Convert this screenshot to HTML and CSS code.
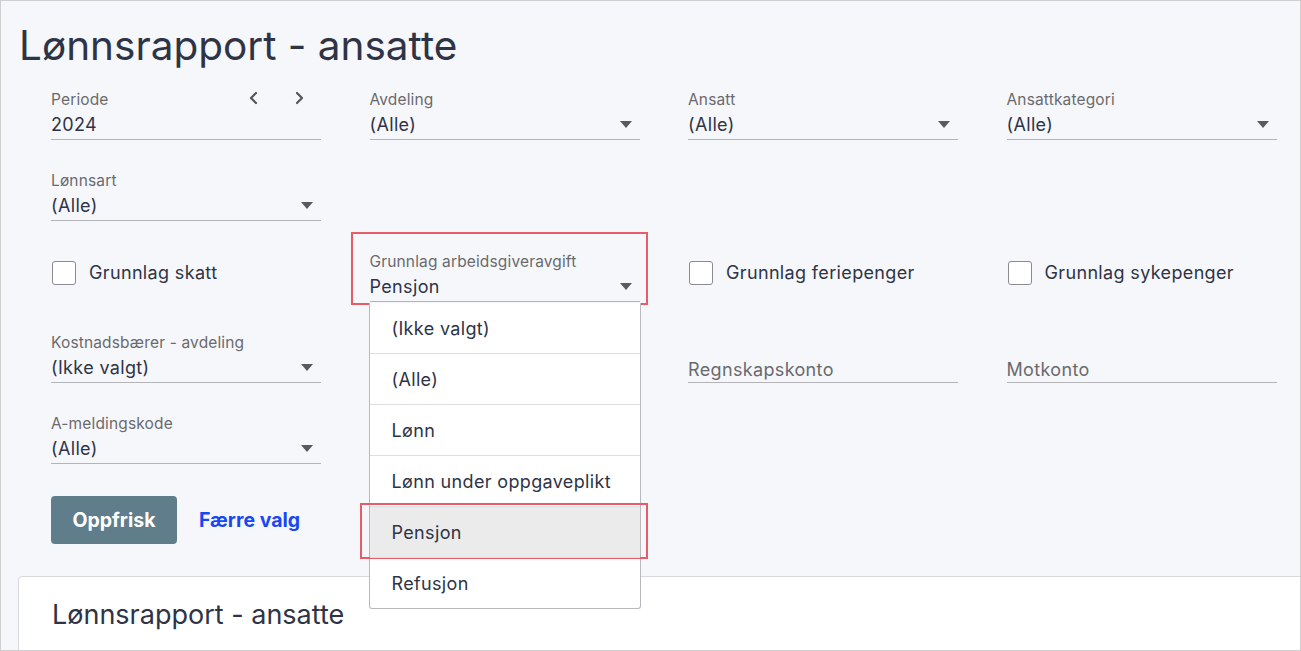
FILE: index.html
```html
<!DOCTYPE html>
<html lang="no">
<head>
<meta charset="utf-8">
<title>Lønnsrapport - ansatte</title>
<link rel="stylesheet" href="styles.css">
</head>
<body>
<div class="frame">
  <h1 class="title">Lønnsrapport - ansatte</h1>

  <div class="filters">
    <!-- row 1 -->
    <div class="field">
      <div class="label-row">
        <span class="label">Periode</span>
        <span class="nav">
          <svg width="12" height="14" viewBox="0 0 12 14"><path d="M8 2 L3 7 L8 12" fill="none" stroke="#555" stroke-width="2.2" stroke-linecap="round" stroke-linejoin="round"/></svg>
          <svg width="12" height="14" viewBox="0 0 12 14"><path d="M4 2 L9 7 L4 12" fill="none" stroke="#555" stroke-width="2.2" stroke-linecap="round" stroke-linejoin="round"/></svg>
        </span>
      </div>
      <div class="value">2024</div>
    </div>
    <div class="field select">
      <span class="label">Avdeling</span>
      <div class="value">(Alle)</div>
      <span class="caret"></span>
    </div>
    <div class="field select">
      <span class="label">Ansatt</span>
      <div class="value">(Alle)</div>
      <span class="caret"></span>
    </div>
    <div class="field select">
      <span class="label">Ansattkategori</span>
      <div class="value">(Alle)</div>
      <span class="caret"></span>
    </div>

    <!-- row 2 -->
    <div class="field select">
      <span class="label">Lønnsart</span>
      <div class="value">(Alle)</div>
      <span class="caret"></span>
    </div>
    <div class="empty"></div>
    <div class="empty"></div>
    <div class="empty"></div>

    <!-- row 3 -->
    <label class="check"><span class="box"></span><span>Grunnlag skatt</span></label>
    <div class="field select open">
      <span class="label">Grunnlag arbeidsgiveravgift</span>
      <div class="value">Pensjon</div>
      <span class="caret"></span>
      <span class="highlight field-hl"></span>
      <ul class="menu">
        <li>(Ikke valgt)</li>
        <li>(Alle)</li>
        <li>Lønn</li>
        <li>Lønn under oppgaveplikt</li>
        <li class="active">Pensjon<span class="highlight item-hl"></span></li>
        <li>Refusjon</li>
      </ul>
    </div>
    <label class="check"><span class="box"></span><span>Grunnlag feriepenger</span></label>
    <label class="check"><span class="box"></span><span>Grunnlag sykepenger</span></label>

    <!-- row 4 -->
    <div class="field select">
      <span class="label">Kostnadsbærer - avdeling</span>
      <div class="value">(Ikke valgt)</div>
      <span class="caret"></span>
    </div>
    <div class="empty"></div>
    <div class="field input"><div class="placeholder">Regnskapskonto</div></div>
    <div class="field input"><div class="placeholder">Motkonto</div></div>

    <!-- row 5 -->
    <div class="field select">
      <span class="label">A-meldingskode</span>
      <div class="value">(Alle)</div>
      <span class="caret"></span>
    </div>
  </div>

  <div class="actions">
    <button class="btn">Oppfrisk</button>
    <a class="link" href="#">Færre valg</a>
  </div>

  <div class="card">
    <h2 class="card-title">Lønnsrapport - ansatte</h2>
  </div>
</div>
</body>
</html>
```

FILE: styles.css
```css
* { box-sizing: border-box; }
html, body { margin: 0; padding: 0; }
body {
  font-family: Inter, "Noto Sans", "Liberation Sans", sans-serif;
  color: #2e3446;
  background: #ffffff;
}
.frame {
  width: 1301px;
  height: 651px;
  border: 1px solid #cfcfcf;
  background: #f6f7fb;
  overflow: hidden;
}
.title {
  margin: 0;
  padding: 21px 0 0 18px;
  font-size: 40.5px;
  line-height: 48px;
  font-weight: 400;
  color: #2e3446;
  letter-spacing: 0;
}
.filters {
  display: grid;
  grid-template-columns: repeat(4, 270px);
  column-gap: 48.5px;
  row-gap: 31px;
  margin: 20px 0 0 50px;
}
.field {
  position: relative;
  height: 50px;
  border-bottom: 1px solid #b3b3b8;
  display: flex;
  flex-direction: column;
}
.label-row {
  display: flex;
  justify-content: space-between;
  align-items: center;
}
.nav {
  display: flex;
  gap: 33px;
  padding-right: 16px;
  margin-top: -4px;
}
.label {
  font-size: 15.5px;
  line-height: 20px;
  letter-spacing: 0.15px;
  color: #6a6a6e;
}
.value {
  margin-top: 3px;
  font-size: 18px;
  line-height: 24px;
  letter-spacing: 0.35px;
  color: #2e3446;
}
.caret {
  position: absolute;
  right: 8px;
  top: 31px;
  width: 0;
  height: 0;
  border-left: 6.5px solid transparent;
  border-right: 6.5px solid transparent;
  border-top: 7px solid #5a5a5e;
}
.input {
  justify-content: flex-end;
}
.placeholder {
  font-size: 18px;
  line-height: 24px;
  letter-spacing: 0.35px;
  color: #6a6a6e;
}
.check {
  display: flex;
  align-items: center;
  gap: 13px;
  padding-bottom: 9px;
  font-size: 18px;
  letter-spacing: 0.35px;
  color: #2e3446;
}
.box {
  width: 24px;
  height: 24px;
  border: 1px solid #8a8a90;
  border-radius: 3px;
  background: #ffffff;
  margin-left: 1px;
  flex: none;
}
.highlight {
  position: absolute;
  border: 2px solid #e65c69;
  pointer-events: none;
}
.field-hl {
  left: -19px;
  top: -20px;
  width: 297px;
  height: 73px;
}
.menu {
  position: absolute;
  z-index: 5;
  top: 51px;
  left: -1px;
  width: 272px;
  margin: 0;
  padding: 0;
  list-style: none;
  background: #ffffff;
  border: 1px solid #b9b9bd;
  border-top: none;
  border-radius: 0 0 3px 3px;
}
.menu li {
  position: relative;
  height: 51px;
  padding-left: 22px;
  display: flex;
  align-items: center;
  font-size: 18px;
  letter-spacing: 0.35px;
  color: #2e3446;
  border-top: 1px solid #dedee2;
}
.menu li:first-child { border-top: none; height: 50px; }
.menu li.active { background: #ebebeb; }
.item-hl {
  left: -10px;
  top: -4px;
  width: 288px;
  height: 56px;
}
.actions {
  display: flex;
  align-items: center;
  gap: 22px;
  margin: 32px 0 0 50px;
}
.btn {
  font-family: inherit;
  width: 126px;
  height: 48px;
  border: none;
  border-radius: 4px;
  background: #607d8b;
  color: #ffffff;
  font-size: 19.5px;
  font-weight: 700;
  cursor: pointer;
}
.link {
  color: #1748f2;
  font-size: 19.5px;
  font-weight: 700;
  text-decoration: none;
}
.card {
  margin: 32px 0 0 17px;
  width: 1300px;
  height: 120px;
  background: #ffffff;
  border: 1px solid #d8d9de;
  border-radius: 4px;
  padding: 22px 0 0 33px;
}
.card-title {
  margin: 0;
  font-size: 27px;
  line-height: 32px;
  font-weight: 400;
  color: #2e3446;
}
```
